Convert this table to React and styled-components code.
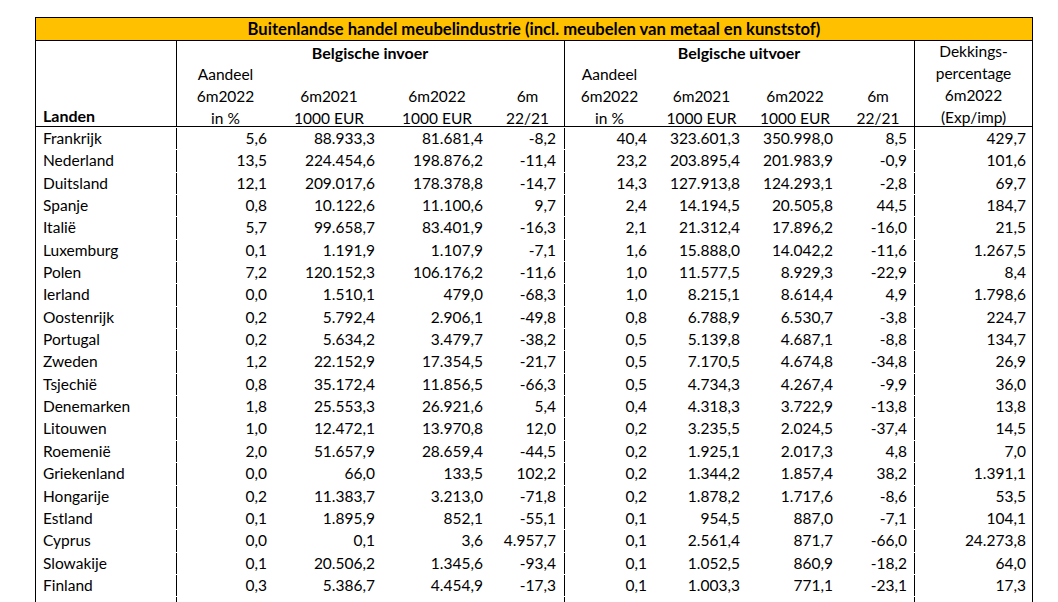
import React from 'react'
import styled, { createGlobalStyle } from 'styled-components'

const GlobalStyle = createGlobalStyle`
  html, body {
    margin: 0;
    padding: 0;
    background: #fff;
    height: 602px;
    overflow: hidden;
  }
  body {
    font-family: Lato, "Open Sans", sans-serif;
    color: #000;
  }
`

const COLS = '140px 99px 108px 108px 73px 91px 93px 94px 72px 118px'

const Page = styled.div`
  padding: 17px 0 0 35px;
`

const Sheet = styled.div`
  width: 996px;
  border: 1px solid #000;
  border-bottom: none;
  font-size: 15.5px;
`

const Title = styled.div`
  height: 22px;
  line-height: 23px;
  background: #ffc000;
  border-bottom: 1px solid #000;
  text-align: center;
  font-weight: 700;
  font-size: 16.6px;
`

const Head = styled.div`
  display: flex;
  height: 85px;
  border-bottom: 1px solid #000;
`

const LandenHead = styled.div`
  width: 140px;
  display: flex;
  align-items: flex-end;
  padding: 0 0 0 7px;
  box-sizing: border-box;
  font-weight: 700;
  font-size: 16px;
  line-height: 21.5px;
`

const Group = styled.div`
  width: ${p => p.$w}px;
  box-sizing: border-box;
  border-left: 1px solid #000;
  display: flex;
  flex-direction: column;
`

const GroupTitle = styled.div`
  height: 21.5px;
  line-height: 23px;
  text-align: center;
  font-weight: 700;
  font-size: 16px;
  margin-left: -1px;
`

const SubHead = styled.div`
  flex: 1;
  display: grid;
  grid-template-columns: ${p => p.$cols};
  margin-left: -1px;
`

const SubCell = styled.div`
  display: flex;
  flex-direction: column;
  justify-content: flex-end;
  align-items: center;
  line-height: 22px;
  margin-bottom: -2px;
  white-space: nowrap;
`

const DekkingHead = styled(SubCell)`
  width: 118px;
  box-sizing: border-box;
  border-left: 1px solid #000;
`

const Body = styled.div``

const Row = styled.div`
  display: grid;
  grid-template-columns: ${COLS};
  height: 22.35px;
  line-height: 22.35px;
`

const Cell = styled.div`
  text-align: ${p => (p.$left ? 'left' : 'right')};
  padding: ${p => (p.$left ? '0 0 0 7px' : `0 ${p.$pr || 8}px 0 0`)};
  white-space: nowrap;
  ${p =>
    p.$divider &&
    `background: linear-gradient(#000, #000) left 1px / 1px calc(100% - 1px) no-repeat;`}
`

const rows = [
  ['Frankrijk', '5,6', '88.933,3', '81.681,4', '-8,2', '40,4', '323.601,3', '350.998,0', '8,5', '429,7'],
  ['Nederland', '13,5', '224.454,6', '198.876,2', '-11,4', '23,2', '203.895,4', '201.983,9', '-0,9', '101,6'],
  ['Duitsland', '12,1', '209.017,6', '178.378,8', '-14,7', '14,3', '127.913,8', '124.293,1', '-2,8', '69,7'],
  ['Spanje', '0,8', '10.122,6', '11.100,6', '9,7', '2,4', '14.194,5', '20.505,8', '44,5', '184,7'],
  ['Italië', '5,7', '99.658,7', '83.401,9', '-16,3', '2,1', '21.312,4', '17.896,2', '-16,0', '21,5'],
  ['Luxemburg', '0,1', '1.191,9', '1.107,9', '-7,1', '1,6', '15.888,0', '14.042,2', '-11,6', '1.267,5'],
  ['Polen', '7,2', '120.152,3', '106.176,2', '-11,6', '1,0', '11.577,5', '8.929,3', '-22,9', '8,4'],
  ['Ierland', '0,0', '1.510,1', '479,0', '-68,3', '1,0', '8.215,1', '8.614,4', '4,9', '1.798,6'],
  ['Oostenrijk', '0,2', '5.792,4', '2.906,1', '-49,8', '0,8', '6.788,9', '6.530,7', '-3,8', '224,7'],
  ['Portugal', '0,2', '5.634,2', '3.479,7', '-38,2', '0,5', '5.139,8', '4.687,1', '-8,8', '134,7'],
  ['Zweden', '1,2', '22.152,9', '17.354,5', '-21,7', '0,5', '7.170,5', '4.674,8', '-34,8', '26,9'],
  ['Tsjechië', '0,8', '35.172,4', '11.856,5', '-66,3', '0,5', '4.734,3', '4.267,4', '-9,9', '36,0'],
  ['Denemarken', '1,8', '25.553,3', '26.921,6', '5,4', '0,4', '4.318,3', '3.722,9', '-13,8', '13,8'],
  ['Litouwen', '1,0', '12.472,1', '13.970,8', '12,0', '0,2', '3.235,5', '2.024,5', '-37,4', '14,5'],
  ['Roemenië', '2,0', '51.657,9', '28.659,4', '-44,5', '0,2', '1.925,1', '2.017,3', '4,8', '7,0'],
  ['Griekenland', '0,0', '66,0', '133,5', '102,2', '0,2', '1.344,2', '1.857,4', '38,2', '1.391,1'],
  ['Hongarije', '0,2', '11.383,7', '3.213,0', '-71,8', '0,2', '1.878,2', '1.717,6', '-8,6', '53,5'],
  ['Estland', '0,1', '1.895,9', '852,1', '-55,1', '0,1', '954,5', '887,0', '-7,1', '104,1'],
  ['Cyprus', '0,0', '0,1', '3,6', '4.957,7', '0,1', '2.561,4', '871,7', '-66,0', '24.273,8'],
  ['Slowakije', '0,1', '20.506,2', '1.345,6', '-93,4', '0,1', '1.052,5', '860,9', '-18,2', '64,0'],
  ['Finland', '0,3', '5.386,7', '4.454,9', '-17,3', '0,1', '1.003,3', '771,1', '-23,1', '17,3'],
  ['', '', '', '', '', '', '', '', '', ''],
]

const dividers = [1, 5, 9]
const padRight = { 7: 9, 8: 7, 9: 6 }

const Lines = ({ items }) => items.map((t, i) => <span key={i}>{t}</span>)

const App = () => {
  return (
    <Page>
      <GlobalStyle />
      <Sheet>
        <Title>Buitenlandse handel meubelindustrie (incl. meubelen van metaal en kunststof)</Title>
        <Head>
          <LandenHead>Landen</LandenHead>
          <Group $w={388}>
            <GroupTitle>Belgische invoer</GroupTitle>
            <SubHead $cols="99px 108px 108px 73px">
              <SubCell><Lines items={['Aandeel', '6m2022', 'in %']} /></SubCell>
              <SubCell><Lines items={['6m2021', '1000 EUR']} /></SubCell>
              <SubCell><Lines items={['6m2022', '1000 EUR']} /></SubCell>
              <SubCell><Lines items={['6m', '22/21']} /></SubCell>
            </SubHead>
          </Group>
          <Group $w={350}>
            <GroupTitle>Belgische uitvoer</GroupTitle>
            <SubHead $cols="91px 93px 94px 72px">
              <SubCell><Lines items={['Aandeel', '6m2022', 'in %']} /></SubCell>
              <SubCell><Lines items={['6m2021', '1000 EUR']} /></SubCell>
              <SubCell><Lines items={['6m2022', '1000 EUR']} /></SubCell>
              <SubCell><Lines items={['6m', '22/21']} /></SubCell>
            </SubHead>
          </Group>
          <DekkingHead>
            <Lines items={['Dekkings-', 'percentage', '6m2022', '(Exp/imp)']} />
          </DekkingHead>
        </Head>
        <Body>
          {rows.map((r, ri) => (
            <Row key={ri}>
              {r.map((v, ci) => (
                <Cell
                  key={ci}
                  $left={ci === 0}
                  $divider={dividers.includes(ci)}
                  $pr={padRight[ci]}
                >
                  {v}
                </Cell>
              ))}
            </Row>
          ))}
        </Body>
      </Sheet>
    </Page>
  )
}

export default App
